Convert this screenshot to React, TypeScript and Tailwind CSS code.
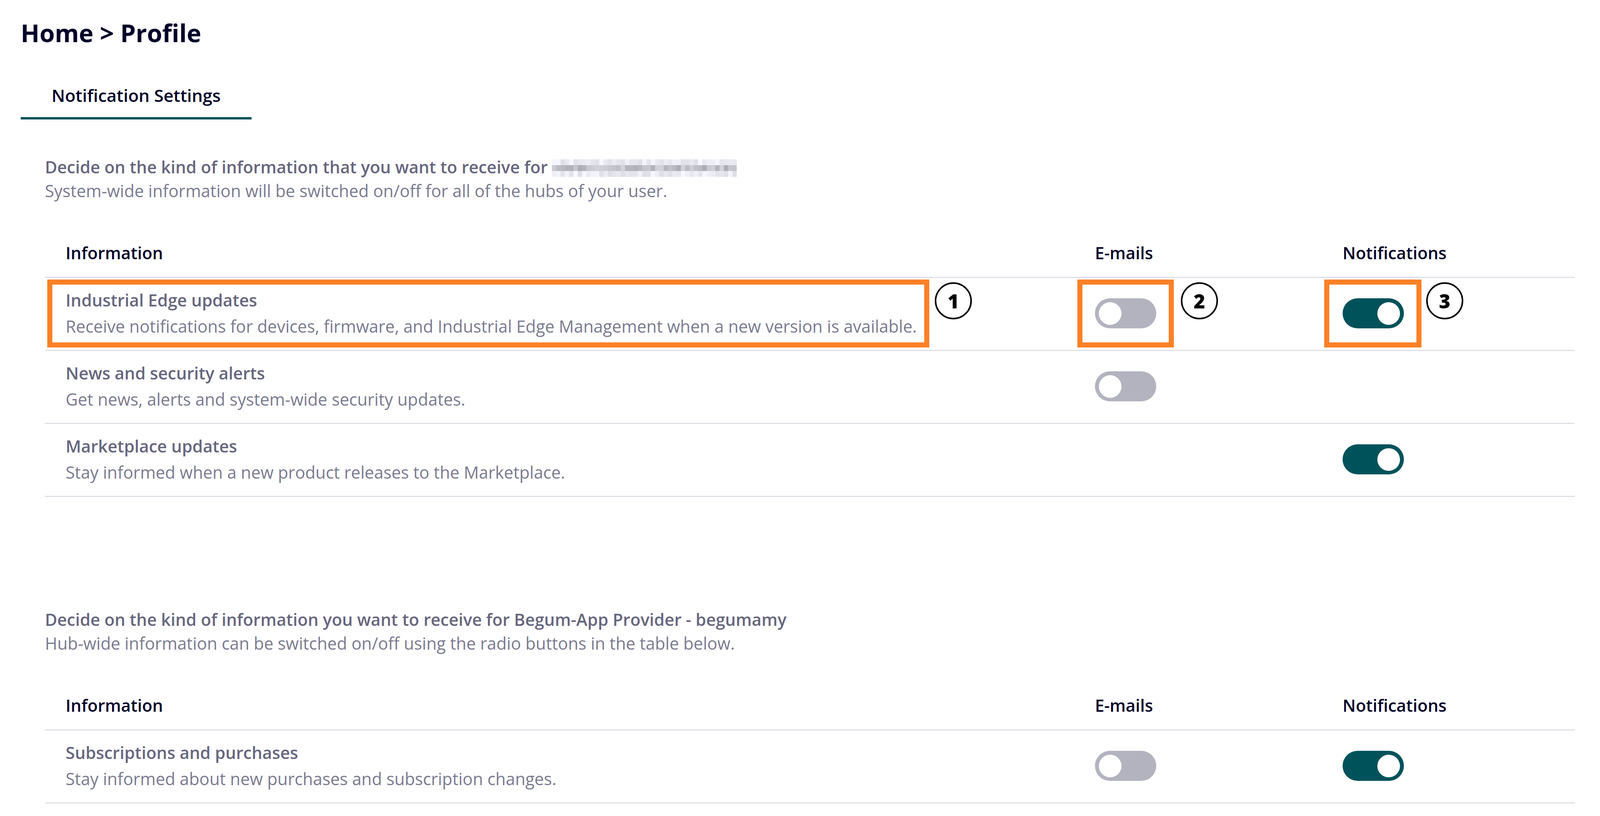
import React from "react";

type Row = {
  title: string;
  desc: string;
  email?: boolean;
  notify?: boolean;
  marked?: boolean;
};

const systemRows: Row[] = [
  {
    title: "Industrial Edge updates",
    desc: "Receive notifications for devices, firmware, and Industrial Edge Management when a new version is available.",
    email: false,
    notify: true,
    marked: true,
  },
  {
    title: "News and security alerts",
    desc: "Get news, alerts and system-wide security updates.",
    email: false,
  },
  {
    title: "Marketplace updates",
    desc: "Stay informed when a new product releases to the Marketplace.",
    notify: true,
  },
];

const hubRows: Row[] = [
  {
    title: "Subscriptions and purchases",
    desc: "Stay informed about new purchases and subscription changes.",
    email: false,
    notify: true,
  },
];

// pixelated (redacted) e-mail address
const Mosaic = () => {
  let seed = 17;
  const rnd = () => {
    seed = (seed * 9301 + 49297) % 233280;
    return seed / 233280;
  };
  const cells: string[] = [];
  for (let r = 0; r < 3; r++) {
    for (let c = 0; c < 43; c++) {
      const base = r === 1 ? 170 : 222;
      const span = r === 1 ? 42 : 26;
      const v = Math.round(base + rnd() * span);
      cells.push(`rgb(${v},${v},${Math.min(255, v + 9)})`);
    }
  }
  return (
    <span className="inline-grid grid-cols-[repeat(43,11px)] grid-rows-[repeat(3,15px)] align-middle ml-[11px] -mt-[4px]">
      {cells.map((bg, i) => (
        <span key={i} style={{ backgroundColor: bg }} />
      ))}
    </span>
  );
};

const Toggle = ({ on }: { on: boolean }) => (
  <div
    className={`w-[157px] h-[77px] rounded-full flex items-center px-[10px] ${
      on ? "bg-[#00525a] justify-end" : "bg-[#b3b3c0] justify-start"
    }`}
  >
    <div className="w-[58px] h-[58px] rounded-full bg-white" />
  </div>
);

const Marker = ({ n, left }: { n: number; left: number }) => (
  <div
    className="absolute top-[11px] w-[95px] h-[95px] rounded-full border-[4px] border-black bg-white flex items-center justify-center text-[50px] font-extrabold text-black leading-none"
    style={{ left }}
  >
    {n}
  </div>
);

const Table = ({ rows }: { rows: Row[] }) => (
  <div>
    <div className="flex border-b-[3px] border-[#e0e0e7] pb-[30px] text-[43px] leading-[62px] font-semibold text-[#000028]">
      <div className="w-[2688px] pl-[53px]">Information</div>
      <div className="w-[634px]">E-mails</div>
      <div className="flex-1">Notifications</div>
    </div>
    {rows.map((row) => (
      <div
        key={row.title}
        className="relative flex items-center border-b-[3px] border-[#e0e0e7] pt-[26px] pb-[29px]"
      >
        <div className="w-[2688px] pl-[53px] text-[43px]">
          <div className="leading-[62px] font-semibold text-[#66667e]">{row.title}</div>
          <div className="mt-[5px] leading-[62px] text-[#7a7a8f]">{row.desc}</div>
        </div>
        <div className="w-[634px]">
          {row.email !== undefined && <Toggle on={row.email} />}
        </div>
        <div className="flex-1">
          {row.notify !== undefined && <Toggle on={row.notify} />}
        </div>
        {row.marked && (
          <>
            <div className="absolute top-[4px] left-[6px] w-[2258px] h-[174px] border-[13px] border-[#fd8127]" />
            <div className="absolute top-[4px] left-[2643px] w-[247px] h-[174px] border-[13px] border-[#fd8127]" />
            <div className="absolute top-[4px] left-[3275px] w-[249px] h-[174px] border-[13px] border-[#fd8127]" />
            <Marker n={1} left={2278} />
            <Marker n={2} left={2908} />
            <Marker n={3} left={3536} />
          </>
        )}
      </div>
    ))}
  </div>
);

export default function App() {
  return (
    <div className="min-h-screen bg-white font-['Open_Sans',sans-serif] pl-[53px] pr-[65px] pt-[44px]">
      <h1 className="text-[63px] leading-[80px] font-bold text-[#000028]">Home &gt; Profile</h1>

      <div className="mt-[90px] inline-block border-b-[6px] border-[#00525a] px-[79px] pb-[26px] text-[44px] leading-[60px] font-semibold text-[#000028]">
        Notification Settings
      </div>

      <div className="pl-[62px]">
        <div className="mt-[91px] text-[43px] leading-[61px]">
          <p className="font-semibold text-[#66667e]">
            Decide on the kind of information that you want to receive for
            <Mosaic />
          </p>
          <p className="text-[#7a7a8f]">System-wide information will be switched on/off for all of the hubs of your user.</p>
        </div>

        <div className="mt-[98px]">
          <Table rows={systemRows} />
        </div>

        <div className="mt-[283px] text-[43px] leading-[61px]">
          <p className="font-semibold text-[#66667e]">
            Decide on the kind of information you want to receive for Begum-App Provider - begumamy
          </p>
          <p className="text-[#7a7a8f]">Hub-wide information can be switched on/off using the radio buttons in the table below.</p>
        </div>

        <div className="mt-[98px]">
          <Table rows={hubRows} />
        </div>
      </div>
    </div>
  );
}
